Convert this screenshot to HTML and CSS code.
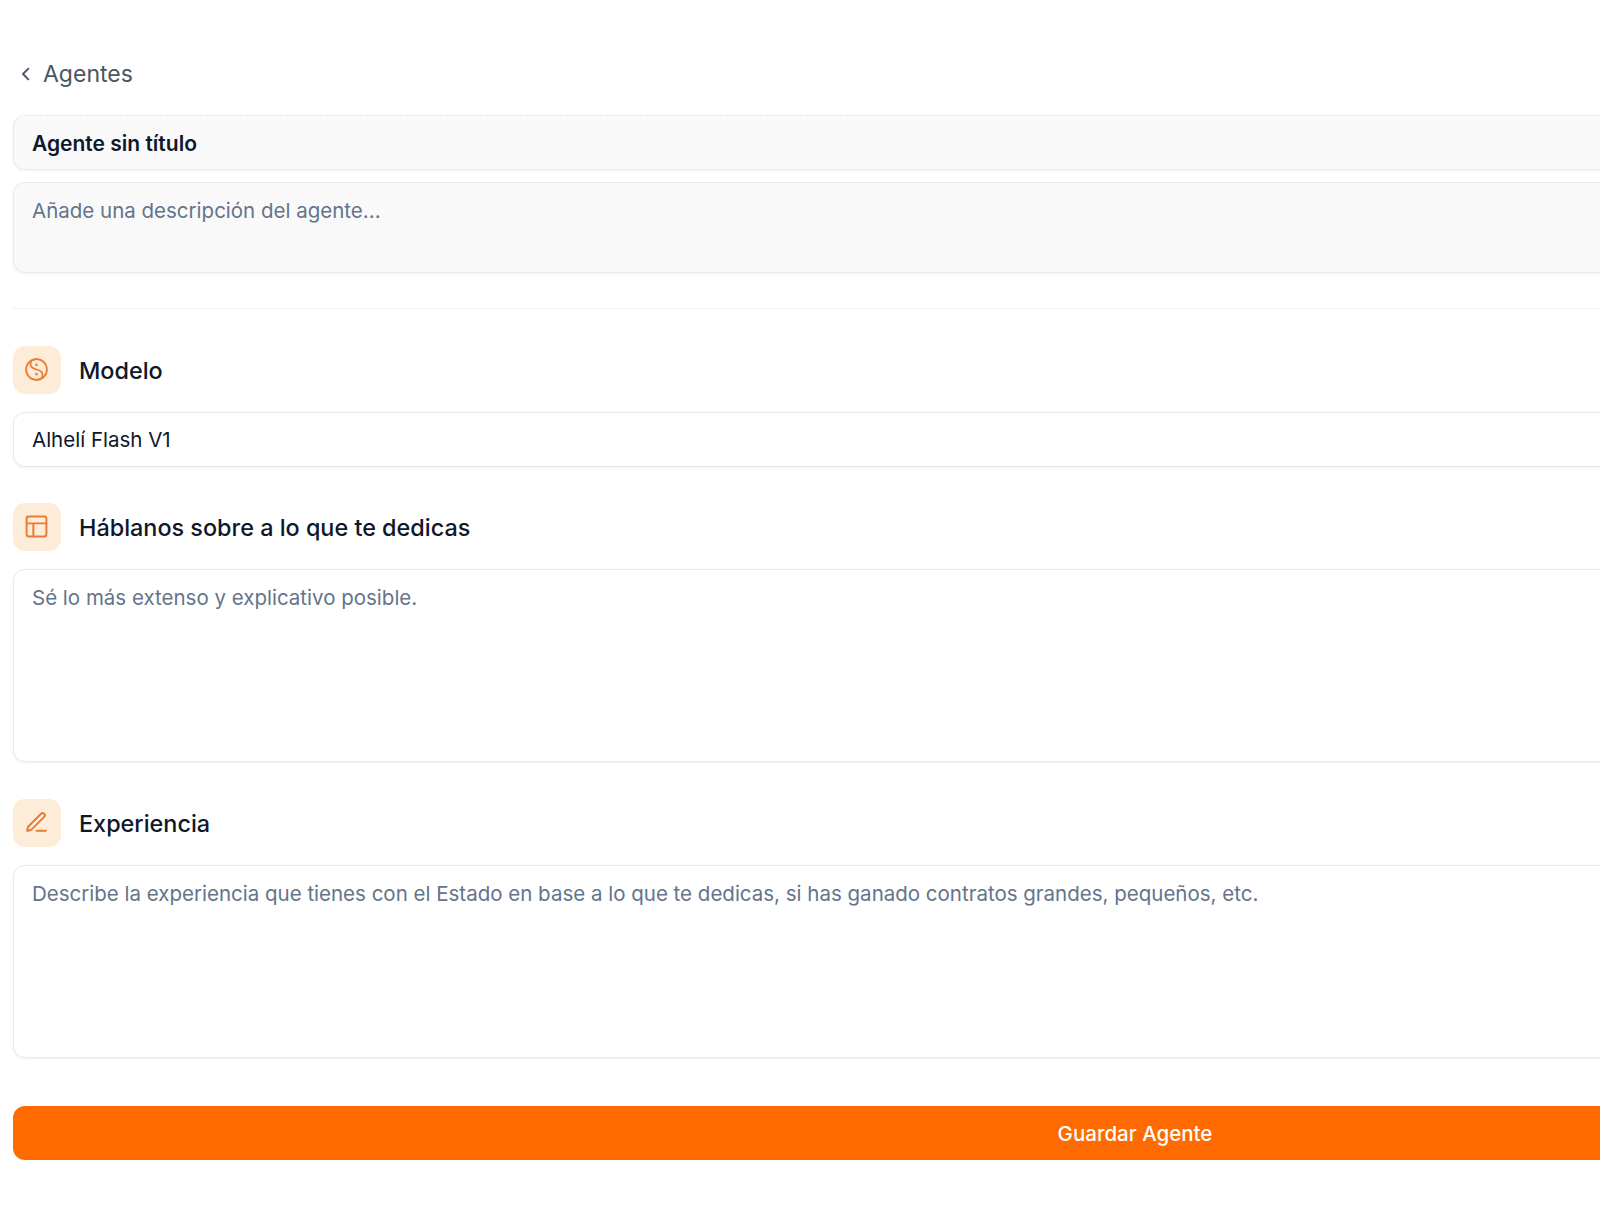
FILE: index.html
```html
<!DOCTYPE html>
<html lang="es">
<head>
<meta charset="utf-8">
<title>Agente sin título</title>
<link rel="stylesheet" href="styles.css">
</head>
<body>
<main class="page">
  <a class="back" href="#">
    <svg class="back-icon" viewBox="0 0 24 24" fill="none" stroke="currentColor" stroke-width="2.800" stroke-linecap="round" stroke-linejoin="round"><path d="M15.500 4l-8 8 8 8"/></svg>
    <span>Agentes</span>
  </a>
  <div class="field field-title">Agente sin título</div>
  <div class="field field-desc">Añade una descripción del agente...</div>
  <hr class="divider">
  <section class="block block-model">
    <div class="heading">
      <span class="badge">
        <svg viewBox="0 0 24 24" fill="none" stroke="currentColor" stroke-width="1.700" stroke-linecap="round"><circle cx="12" cy="12" r="10"/><path d="M12 2c-3.600 0-5.800 2.300-5.800 5 0 2.800 2.500 4.200 5.800 5 3.300.8 5.800 2.200 5.800 5 0 2.700-2.200 5-5.800 5"/><circle cx="12" cy="7.500" r=".5"/><circle cx="12" cy="16.500" r=".5"/></svg>
      </span>
      <h2>Modelo</h2>
    </div>
    <div class="field field-select">Alhelí Flash V1</div>
  </section>
  <section class="block">
    <div class="heading">
      <span class="badge">
        <svg viewBox="0 0 24 24" fill="none" stroke="currentColor" stroke-width="1.900" stroke-linejoin="round"><rect x="2.500" y="2.500" width="19" height="19" rx="2"/><path d="M2.500 9h19M9 9v12.500"/></svg>
      </span>
      <h2>Háblanos sobre a lo que te dedicas</h2>
    </div>
    <div class="field field-area">Sé lo más extenso y explicativo posible.</div>
  </section>
  <section class="block block-exp">
    <div class="heading">
      <span class="badge">
        <svg viewBox="0 0 24 24" fill="none" stroke="currentColor" stroke-width="1.900" stroke-linecap="round" stroke-linejoin="round"><path d="M12 20h9"/><path d="M16.376 3.622a1 1 0 0 1 3.002 3.002L7.368 18.635a2 2 0 0 1-.855.506l-2.872.838a.5.5 0 0 1-.62-.62l.838-2.872a2 2 0 0 1 .506-.854z"/></svg>
      </span>
      <h2>Experiencia</h2>
    </div>
    <div class="field field-area">Describe la experiencia que tienes con el Estado en base a lo que te dedicas, si has ganado contratos grandes, pequeños, etc.</div>
  </section>
  <button class="save" type="button">Guardar Agente</button>
</main>
</body>
</html>
```
FILE: styles.css
```css
html, body {
  margin: 0;
  height: 100%;
  overflow: hidden;
  background: #fff;
}
* { box-sizing: border-box; }
body {
  font-family: Inter, "Liberation Sans", sans-serif;
  color: #0f172a;
}
.page {
  width: 2244px;
  margin-left: 13px;
  padding-top: 59px;
  display: flex;
  flex-direction: column;
}
.back {
  display: flex;
  align-items: center;
  gap: 9px;
  height: 30px;
  padding-left: 5px;
  color: #4b5563;
  font-size: 23px;
  text-decoration: none;
}
.back-icon { width: 16px; height: 16px; }
.field {
  border: 1px solid #e8e9eb;
  border-radius: 12px;
  padding: 0 18px;
  font-size: 20.500px;
  box-shadow: 0 1px 3px rgba(0, 0, 0, .06);
}
.field-title {
  margin-top: 26px;
  height: 55px;
  line-height: 55px;
  background: #f9f9fa;
  font-size: 21px;
  font-weight: 600;
  color: #0f172a;
  border-top-style: dashed;
}
.field-desc {
  margin-top: 12px;
  height: 91px;
  padding-top: 15px;
  line-height: 26px;
  background: #f9f9fa;
  color: #64748b;
}
.divider {
  width: 100%;
  margin: 35px 0 0;
  border: 0;
  border-top: 1px solid #f1f2f4;
}
.block { margin-top: 36px; }
.block-model { margin-top: 37px; }
.block-exp { margin-top: 37px; }
.heading {
  display: flex;
  align-items: center;
  gap: 18px;
  height: 48px;
}
.heading h2 {
  margin: 0;
  font-size: 23.400px;
  font-weight: 500;
  color: #0f172a;
}
.badge {
  width: 48px;
  height: 48px;
  padding: 0 2px 1px 0;
  border-radius: 12px;
  background: #fdecd8;
  color: #e97c35;
  display: flex;
  align-items: center;
  justify-content: center;
}
.badge svg { width: 25px; height: 25px; }
.field-select {
  margin-top: 18px;
  height: 55px;
  line-height: 53px;
  background: #fff;
  color: #0f172a;
}
.field-area {
  margin-top: 18px;
  height: 193px;
  padding-top: 15px;
  line-height: 26px;
  background: #fff;
  color: #64748b;
}
.save {
  margin-top: 48px;
  height: 54px;
  width: 100%;
  border: 0;
  border-radius: 12px;
  background: #ff6b00;
  color: #fff;
  font: 500 20.500px Inter, "Liberation Sans", sans-serif;
}
```
